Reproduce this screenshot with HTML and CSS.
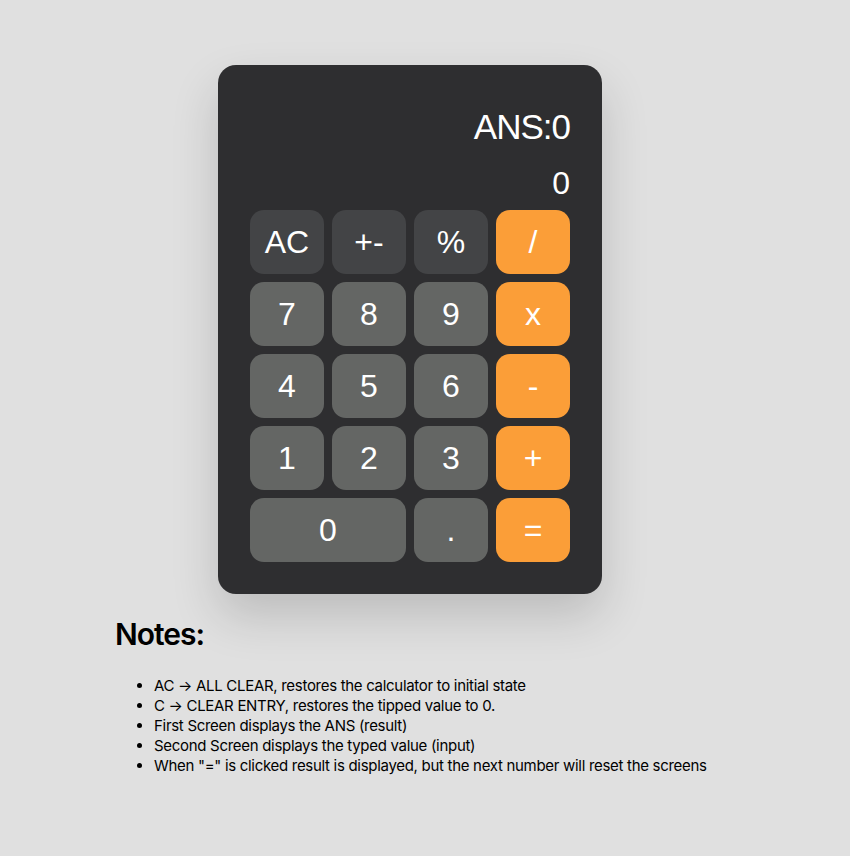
FILE: index.html
```html
<!DOCTYPE html>
<html lang="en">
<head>
<meta charset="utf-8">
<title>Calculator</title>
<link rel="stylesheet" href="styles.css">
</head>
<body>
<main class="page">
  <div class="calc">
    <div class="screen">
      <div class="ans">ANS:0</div>
      <div class="input">0</div>
    </div>
    <div class="keys">
      <button class="key fn">AC</button>
      <button class="key fn">+-</button>
      <button class="key fn">%</button>
      <button class="key op">/</button>
      <button class="key num">7</button>
      <button class="key num">8</button>
      <button class="key num">9</button>
      <button class="key op">x</button>
      <button class="key num">4</button>
      <button class="key num">5</button>
      <button class="key num">6</button>
      <button class="key op">-</button>
      <button class="key num">1</button>
      <button class="key num">2</button>
      <button class="key num">3</button>
      <button class="key op">+</button>
      <button class="key num wide">0</button>
      <button class="key num">.</button>
      <button class="key op">=</button>
    </div>
  </div>
  <section class="notes">
    <h1 class="notes-title">Notes:</h1>
    <ul class="notes-list">
      <li>AC → ALL CLEAR, restores the calculator to initial state</li>
      <li>C → CLEAR ENTRY, restores the tipped value to 0.</li>
      <li>First Screen displays the ANS (result)</li>
      <li>Second Screen displays the typed value (input)</li>
      <li>When "=" is clicked result is displayed, but the next number will reset the screens</li>
    </ul>
  </section>
</main>
</body>
</html>
```
FILE: styles.css
```css
* { box-sizing: border-box; }
html, body { margin: 0; padding: 0; }
body {
  background: #e0e0e0;
  font-family: Inter, "Liberation Sans", sans-serif;
  color: #000;
}
.page {
  padding-top: 65px;
  display: flex;
  flex-direction: column;
}
.calc {
  margin-left: 218px;
  width: 384px;
  background: #2e2e30;
  border-radius: 18px;
  padding: 32px;
  box-shadow: 0 22px 48px rgba(0,0,0,0.16);
}
.screen {
  font-family: "Liberation Sans", Arial, sans-serif;
  color: #fff;
  text-align: right;
  padding-top: 8px;
}
.ans {
  font-size: 35px;
  line-height: 44px;
  letter-spacing: -1px;
}
.input {
  font-size: 32px;
  line-height: 48px;
  margin-top: 10px;
  margin-bottom: 3px;
}
.keys {
  display: grid;
  grid-template-columns: repeat(4, 74px);
  grid-auto-rows: 64px;
  gap: 8px;
}
.key {
  border: none;
  border-radius: 14px;
  color: #fff;
  font-family: "Liberation Sans", Arial, sans-serif;
  font-size: 32px;
  padding: 0;
}
.fn { background: #434446; }
.num { background: #646664; }
.op { background: #fb9e38; }
.wide { grid-column: span 2; }
.notes {
  margin-left: 115px;
  margin-top: 22px;
}
.notes-title {
  font-size: 30px;
  font-weight: 600;
  letter-spacing: -1px;
  margin: 0 0 24px;
  line-height: 36px;
}
.notes-list {
  margin: 0;
  padding-left: 39px;
  font-size: 15px;
  line-height: 20px;
  letter-spacing: -0.3px;
}
```
